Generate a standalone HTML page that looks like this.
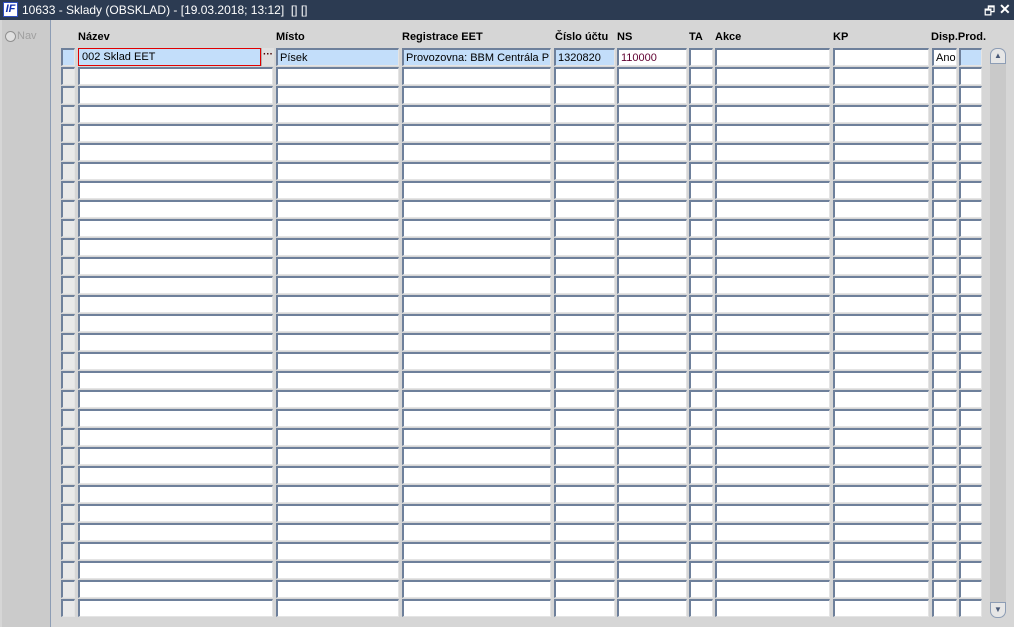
<!DOCTYPE html>
<html><head><meta charset="utf-8"><style>
body{margin:0;width:1014px;height:627px;background:#d6d6d6;font-family:"Liberation Sans",Arial,sans-serif;font-size:11px;position:relative;overflow:hidden}
.a{position:absolute}
#t{left:0;top:0;width:1014px;height:20px;background:#2c3b52;color:#fff;font-size:12px}
#lp{left:2px;top:20px;width:48px;height:607px;background:#cbcbcb;border-right:1px solid #8d9db5}
.h{top:31px;font-weight:bold;font-size:11px;color:#000}
.c{position:absolute;height:18px;background:#fff;border-top:2px solid #6e809b;border-left:2px solid #6e809b;border-right:1px solid #e4e4e4;border-bottom:1px solid #e4e4e4;box-sizing:border-box;line-height:17px;padding-left:2px;white-space:nowrap;overflow:hidden;font-size:11px}
.s{background:#c3defa}
.g{background:#e9e9e9}
</style></head><body>
<div id="t" class="a">
<div class="a" style="left:3px;top:2px;width:15px;height:15px;background:#fff;border:1px solid #3050c0;box-sizing:border-box;color:#1030b0;font-weight:bold;font-style:italic;font-size:11px;line-height:13px;text-align:center">IF</div>
<div class="a" style="left:22px;top:3px">10633 - Sklady (OBSKLAD) - [19.03.2018; 13:12]&nbsp; [] []</div>
<div class="a" style="left:984px;top:2px;font-size:12px">🗗</div>
<div class="a" style="left:999px;top:1px;font-size:14px;font-weight:bold">✕</div>
</div>
<div id="lp" class="a"></div>
<div class="a" style="left:5px;top:31px;width:9px;height:9px;border-radius:50%;background:#e0e0e0;border:1px solid #909090"></div>
<div class="a" style="left:17px;top:30px;color:#a0a0a0">Nav</div>
<div class="a h" style="left:78px">Název</div>
<div class="a h" style="left:276px">Místo</div>
<div class="a h" style="left:402px">Registrace EET</div>
<div class="a h" style="left:555px">Číslo účtu</div>
<div class="a h" style="left:617px">NS</div>
<div class="a h" style="left:689px">TA</div>
<div class="a h" style="left:715px">Akce</div>
<div class="a h" style="left:833px">KP</div>
<div class="a h" style="left:931px">Disp.Prod.</div>
<div id="grid"></div>
<div class="a" style="left:990px;top:48px;width:16px;height:570px;background:#c9c9c9;border-radius:7px"></div>
<div class="a" style="left:990px;top:48px;width:16px;height:16px;background:#e6e6e6;border:1px solid #8d9db5;box-sizing:border-box;border-radius:7px 7px 0 0;color:#4a5a78;font-size:8px;text-align:center;line-height:14px">▲</div>
<div class="a" style="left:990px;top:602px;width:16px;height:16px;background:#e6e6e6;border:1px solid #8d9db5;box-sizing:border-box;border-radius:0 0 7px 7px;color:#4a5a78;font-size:8px;text-align:center;line-height:14px">▼</div>
<script>
var cols=[[61,15,'g'],[78,196],[276,124],[402,150],[554,62],[617,71],[689,25],[715,116],[833,97],[932,26],[959,24]];
var h='';
for(var r=0;r<30;r++){var y=48+r*19;
for(var i=0;i<cols.length;i++){var c=cols[i];var cl='c'+(c[2]?' '+c[2]:'');var txt='';var w=c[1]-1;
if(r==0){if(i==0)cl='c s';if([2,3,4,10].indexOf(i)>=0)cl='c s';
if(i==1){cl='c s';txt='002 Sklad EET';w=183;}
if(i==2)txt='Písek';if(i==3)txt='Provozovna: BBM Centrála Písek';if(i==4)txt='1320820';if(i==5)txt='<span style="color:#600030">110000</span>';if(i==9)txt='Ano';}
var st='left:'+c[0]+'px;top:'+y+'px;width:'+w+'px;';
if(r==0&&i==1)st+='border:1px solid #e00000;padding-left:3px;line-height:17px;';
h+='<div class="'+cl+'" style="'+st+'">'+txt+'</div>';}
}
h+='<div class="a" style="left:261px;top:48px;width:13px;height:18px;background:#e0e0e0;border-left:1px solid #b0b0b0;box-sizing:border-box;font-weight:bold;text-align:center;line-height:14px;font-size:10px;color:#400">···</div>';
document.getElementById('grid').innerHTML=h;
</script>
</body></html>
